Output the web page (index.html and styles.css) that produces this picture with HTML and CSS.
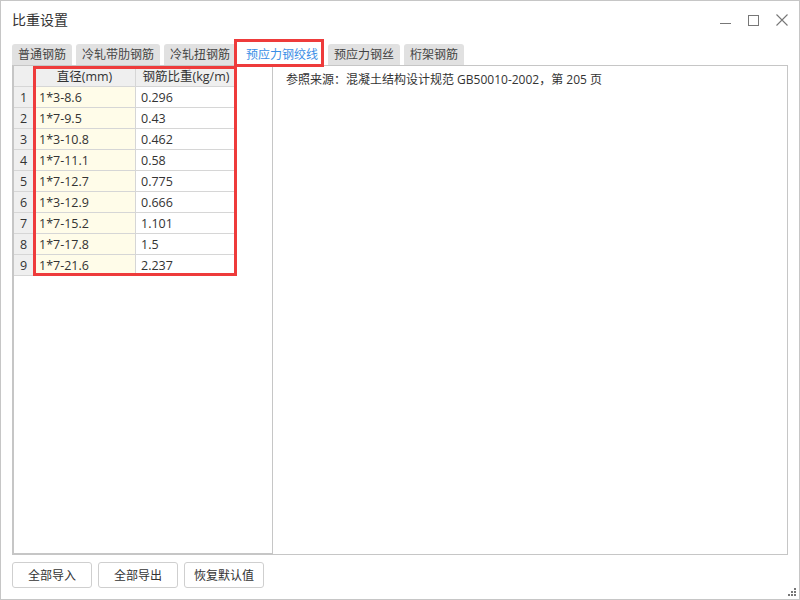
FILE: index.html
```html
<!DOCTYPE html>
<html lang="zh-CN">
<head>
<meta charset="utf-8">
<title>比重设置</title>
<link rel="stylesheet" href="styles.css">
</head>
<body>
<div class="window">
  <div class="titlebar">
    <div class="title">比重设置</div>
    <div class="controls">
      <svg class="ctl ctl-min" width="11" height="11" viewBox="0 0 11 11"><line x1="0" y1="8.5" x2="11" y2="8.5" stroke="#777" stroke-width="1"/></svg>
      <svg class="ctl ctl-max" width="11" height="11" viewBox="0 0 11 11"><rect x="0.5" y="0.5" width="10" height="10" fill="none" stroke="#777" stroke-width="1"/></svg>
      <svg class="ctl ctl-close" width="12" height="12" viewBox="0 0 12 12"><path d="M0.5 0.5 L11.5 11.5 M11.5 0.5 L0.5 11.5" stroke="#777" stroke-width="1.1"/></svg>
    </div>
  </div>
  <div class="tabs">
    <div class="tab">普通钢筋</div>
    <div class="tab">冷轧带肋钢筋</div>
    <div class="tab">冷轧扭钢筋</div>
    <div class="tab active">预应力钢绞线</div>
    <div class="tab">预应力钢丝</div>
    <div class="tab">桁架钢筋</div>
  </div>
  <div class="content">
    <div class="left">
      <div class="grid">
        <div class="c rh hd"></div><div class="c hd">直径(mm)</div><div class="c hd">钢筋比重(kg/m)</div>
        <div class="c rh">1</div><div class="c y">1*3-8.6</div><div class="c">0.296</div>
        <div class="c rh">2</div><div class="c y">1*7-9.5</div><div class="c">0.43</div>
        <div class="c rh">3</div><div class="c y">1*3-10.8</div><div class="c">0.462</div>
        <div class="c rh">4</div><div class="c y">1*7-11.1</div><div class="c">0.58</div>
        <div class="c rh">5</div><div class="c y">1*7-12.7</div><div class="c">0.775</div>
        <div class="c rh">6</div><div class="c y">1*3-12.9</div><div class="c">0.666</div>
        <div class="c rh">7</div><div class="c y">1*7-15.2</div><div class="c">1.101</div>
        <div class="c rh">8</div><div class="c y">1*7-17.8</div><div class="c">1.5</div>
        <div class="c rh">9</div><div class="c y">1*7-21.6</div><div class="c">2.237</div>
      </div>
    </div>
    <div class="right">参照来源：混凝土结构设计规范 GB50010-2002，第 205 页</div>
  </div>
  <div class="buttons">
    <button class="btn">全部导入</button>
    <button class="btn">全部导出</button>
    <button class="btn">恢复默认值</button>
  </div>
  <div class="mark mark-tab"></div>
  <div class="mark mark-grid"></div>
  <svg class="grip" width="9" height="9" viewBox="0 0 9 9">
    <rect x="6" y="0" width="2" height="2" fill="#777"/>
    <rect x="3" y="3" width="2" height="2" fill="#777"/>
    <rect x="6" y="3" width="2" height="2" fill="#777"/>
    <rect x="0" y="6" width="2" height="2" fill="#777"/>
    <rect x="3" y="6" width="2" height="2" fill="#777"/>
    <rect x="6" y="6" width="2" height="2" fill="#777"/>
  </svg>
</div>
</body>
</html>
```
FILE: styles.css
```css
* { box-sizing: border-box; }
html, body { margin: 0; padding: 0; background: #fff; }
body {
  font-family: "Open Sans", "Noto Sans CJK SC", sans-serif;
  font-size: 12px;
  color: #333;
}
.window {
  position: relative;
  width: 800px;
  height: 600px;
  border: 1px solid #c6c6c6;
  background: #fff;
  padding: 0 11px 11px 11px;
  display: flex;
  flex-direction: column;
}
.titlebar {
  height: 43px;
  flex: none;
  display: flex;
  align-items: flex-start;
  padding-top: 9px;
}
.title {
  font-size: 14px;
  line-height: 20px;
  color: #333;
}
.controls {
  margin-left: auto;
  display: flex;
  align-items: center;
  gap: 17px;
  padding-top: 4px;
}
.ctl { display: block; }
.tabs {
  height: 21px;
  flex: none;
  display: flex;
  align-items: flex-end;
  gap: 4px;
}
.tab {
  height: 21px;
  padding: 0 6px;
  font-size: 12px;
  line-height: 21px;
  background: #e1e1e1;
  color: #444;
  border-radius: 3px 3px 0 0;
  white-space: nowrap;
}
.tab.active {
  background: #fff;
  color: #3a8ee6;
  position: relative;
  z-index: 1;
  margin-bottom: -1px;
  height: 22px;
}
.content {
  height: 490px;
  flex: none;
  display: flex;
  border: 1px solid #c6c6c6;
}
.left {
  width: 260px;
  flex: none;
  border-left: 1px solid #c6c6c6;
  border-bottom: 1px solid #c6c6c6;
  border-right: 1px solid #c6c6c6;
}
.grid {
  display: grid;
  grid-template-columns: 20px 102px 101px;
  grid-auto-rows: 21px;
  width: 223px;
}
.c {
  border-right: 1px solid #d6d6d6;
  border-bottom: 1px solid #d6d6d6;
  line-height: 21px;
  font-size: 12.5px;
  padding: 0 5px;
  white-space: nowrap;
  overflow: hidden;
  color: #333;
}
.hd {
  background: #efefef;
  text-align: center;
  padding: 0;
}
.rh {
  background: #efefef;
  text-align: center;
  padding: 0;
}
.y { background: #fffce9; }
.right {
  flex: 1;
  padding: 4px 13px;
  line-height: 20px;
  font-size: 12px;
  color: #333;
}
.buttons {
  flex: none;
  display: flex;
  gap: 6px;
  margin-top: 7px;
  height: 26px;
}
.btn {
  width: 80px;
  height: 26px;
  border: 1px solid #cfcfcf;
  border-radius: 3px;
  background: #fff;
  font-family: "Open Sans", "Noto Sans CJK SC", sans-serif;
  font-size: 12px;
  color: #333;
  padding: 0;
}
.mark {
  position: absolute;
  border: 3px solid #ee3b3b;
  pointer-events: none;
  z-index: 5;
}
.mark-tab { left: 233px; top: 38px; width: 90px; height: 28px; }
.mark-grid { left: 32px; top: 65px; width: 204px; height: 210px; }
.grip {
  position: absolute;
  right: 2px;
  bottom: 2px;
}
```
